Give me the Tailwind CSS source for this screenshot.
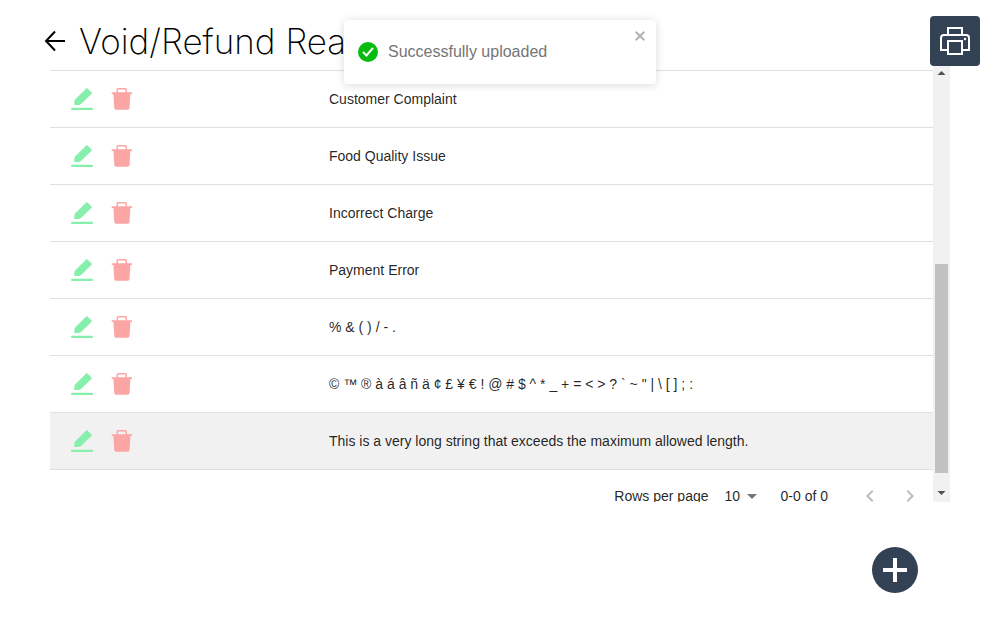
<!DOCTYPE html>
<html lang="en">
<head>
<meta charset="utf-8">
<title>Void/Refund Reasons</title>
<script src="https://cdn.jsdelivr.net/npm/@tailwindcss/browser@4"></script>
</head>
<body class="min-h-screen bg-white font-['Liberation_Sans',sans-serif] text-sm text-black/87">
<svg class="hidden">
  <symbol id="edit" viewBox="0 0 24 24"><path d="M16.200 1.400q.6-.6 1.200 0l4.200 4.100q.5.600 0 1.200L11 17q-.8.800-1.900.9l-4 .2q-.9 0-.9-.9l.3-3.400q.1-.9.800-1.600z"/><rect x="1" y="20.700" width="22" height="2.300" rx="1"/></symbol>
  <symbol id="trash" viewBox="0 0 24 24"><path d="M8.300 1h6.900q1.800 0 1.800 1.800v2.500h5V7h-1.600l-.9 14q-.1 1.800-1.700 1.800H6q-1.600 0-1.700-1.800L3.400 7H1.700V5.300h4.800V2.800Q6.500 1 8.300 1zM8 5.300h7.500V3q0-.6-.6-.6H8.600Q8 2.400 8 3z"/></symbol>
</svg>

<header class="relative z-10 flex h-16 items-start justify-between pt-4 pr-5 pl-[43px]">
  <div class="flex h-[50px] items-center gap-3">
    <button type="button" aria-label="Back"><svg class="block size-6" viewBox="0 0 24 24" fill="none" stroke="#000" stroke-width="2"><path d="M22 12H3M12 2.500L3 12l9 9.500"/></svg></button>
    <h1 class="font-['Inter',sans-serif] text-[35px] leading-[50px] font-extralight text-black">Void/Refund Reasons</h1>
  </div>
  <button type="button" aria-label="Print" class="flex size-[50px] shrink-0 items-center justify-center rounded-sm bg-[#334155]">
    <svg class="size-[30px]" viewBox="0 0 30 30" fill="none" stroke="#fff" stroke-width="2"><path d="M8 9V2h14v7M8 24H1V12q0-3 3-3h22q3 0 3 3v12h-7"/><path d="M8 15h14v13H8z"/><circle cx="25" cy="13" r="1.200" fill="#fff" stroke="none"/></svg>
  </button>
</header>

<main class="mx-[50px] flex h-[438px] overflow-hidden">
  <div class="min-w-0 flex-1 overflow-hidden pt-1.5">
    <table class="w-full table-fixed border-collapse border-t border-[#e0e0e0]">
      <colgroup><col class="w-[263px]"><col></colgroup>
      <tbody id="reasons"></tbody>
    </table>
    <div class="flex h-[52px] items-center justify-end pr-[3px]">
      <label for="rows">Rows per page</label>
      <div class="relative ml-4 w-10">
        <select id="rows" class="block w-full appearance-none bg-transparent outline-none"><option>10</option><option>25</option></select>
        <svg class="pointer-events-none absolute top-2 right-2 h-[5px] w-2.5" viewBox="0 0 10 5"><path d="M0 0h10L5 5z" fill="#757575"/></svg>
      </div>
      <span class="ml-4">0-0 of 0</span>
      <button type="button" aria-label="Previous page" disabled class="ml-[22px] p-2"><svg class="size-6" viewBox="0 0 24 24" fill="#bdbdbd"><path d="M15.410 7.410L14 6l-6 6 6 6 1.410-1.410L10.830 12z"/></svg></button>
      <button type="button" aria-label="Next page" disabled class="p-2"><svg class="size-6" viewBox="0 0 24 24" fill="#bdbdbd"><path d="M10 6L8.590 7.410 13.170 12l-4.580 4.590L10 18l6-6z"/></svg></button>
    </div>
  </div>
  <div class="flex w-[17px] flex-col items-center justify-between bg-[#f1f1f1]" aria-hidden="true">
    <svg class="h-[17px] w-[17px] shrink-0" viewBox="0 0 17 17"><path d="M4.500 11h8L8.500 7z" fill="#505050"/></svg>
    <div class="mt-auto mb-3 h-[209px] w-[13px] bg-[#c1c1c1]"></div>
    <svg class="h-[17px] w-[17px] shrink-0" viewBox="0 0 17 17"><path d="M4.500 6h8l-4 4z" fill="#505050"/></svg>
  </div>
</main>

<div class="mt-[45px] flex justify-end pr-[82px]">
  <button type="button" aria-label="Add reason" class="flex size-[46px] items-center justify-center rounded-full bg-[#334155]">
    <svg class="size-6" viewBox="0 0 24 24" fill="#fff"><path d="M10 0h4v10h10v4H14v10h-4V14H0v-4h10z"/></svg>
  </button>
</div>

<div role="status" class="absolute top-5 left-1/2 z-20 flex h-16 w-[312px] -translate-x-1/2 items-center gap-2.5 rounded bg-white px-3.5 text-base text-[#757575] shadow-[0_1px_10px_rgba(0,0,0,0.15)]">
  <svg class="size-5" viewBox="0 0 20 20"><circle cx="10" cy="10" r="10" fill="#07bc0c"/><path d="M5.500 10.500l3 3L14.500 6.500" fill="none" stroke="#fff" stroke-width="2" stroke-linecap="round"/></svg>
  <span>Successfully uploaded</span>
  <button type="button" aria-label="Close" class="absolute top-[11px] right-[11px]"><svg class="block size-2.5" viewBox="0 0 10 10" fill="none" stroke="#b2b2b2" stroke-width="2"><path d="M0.700 0.700l8.600 8.600M9.300 0.700L0.700 9.300"/></svg></button>
</div>

<template id="row">
  <tr class="h-[57px] border-b border-[#e0e0e0] last:bg-[#f1f1f1]">
    <td class="pl-5"><div class="flex gap-4">
      <button type="button" aria-label="Edit"><svg class="block size-6 fill-[#86efac]"><use href="#edit"/></svg></button>
      <button type="button" aria-label="Delete"><svg class="block size-6 fill-[#fca5a5]"><use href="#trash"/></svg></button>
    </div></td>
    <td class="px-4 leading-5"></td>
  </tr>
</template>
<script>
const reasons = ['Customer Complaint', 'Food Quality Issue', 'Incorrect Charge', 'Payment Error', '% & ( ) / - .', '© ™ ® à á â ñ ä ¢ £ ¥ € ! @ # $ ^ * _ + = < > ? ` ~ " | \\ [ ] ; :', 'This is a very long string that exceeds the maximum allowed length.'];
const row = document.getElementById('row');
for (const reason of reasons) {
  const item = row.content.cloneNode(true);
  item.querySelector('td:last-child').textContent = reason;
  document.getElementById('reasons').append(item);
}
</script>
</body>
</html>
